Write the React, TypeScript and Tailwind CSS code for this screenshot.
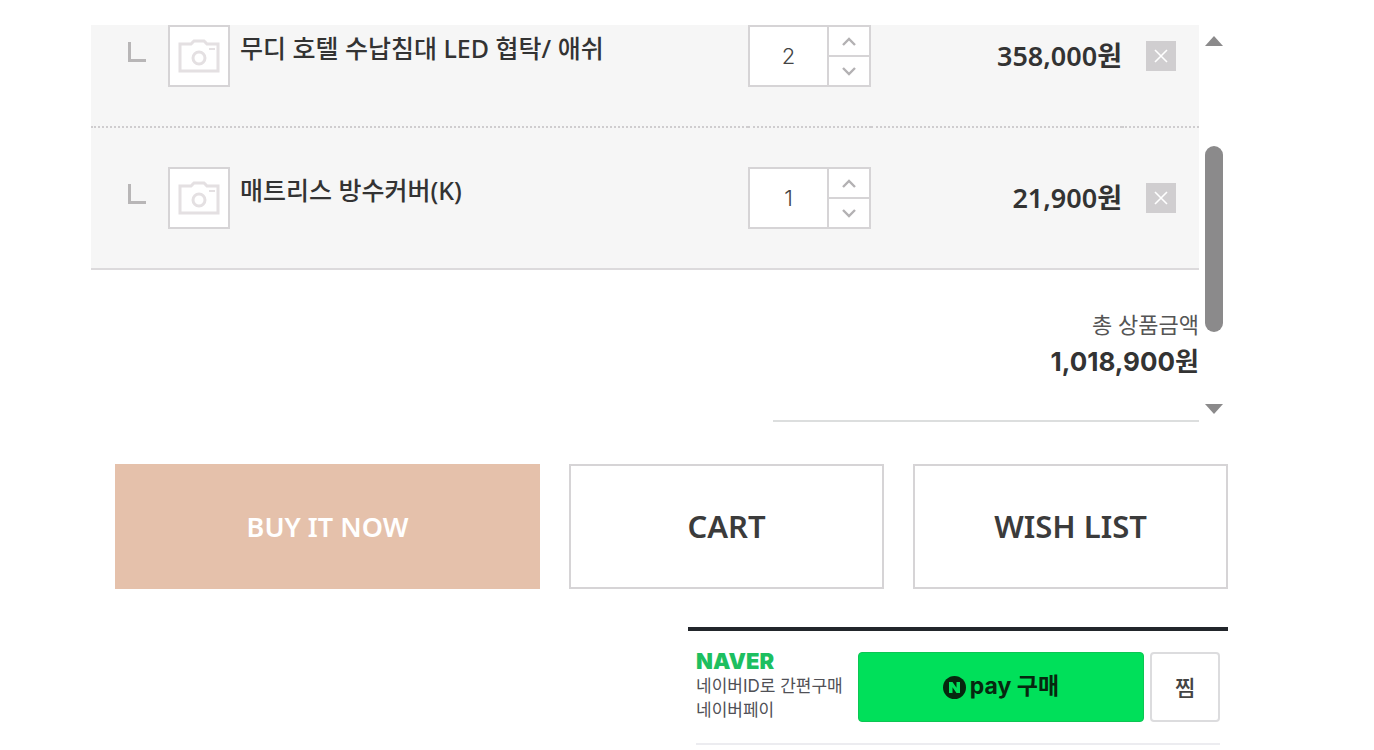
import { useState } from "react";

type CartItem = {
  id: string;
  name: string;
  price: number;
  quantity: number;
};

const initialItems: CartItem[] = [
  { id: "nightstand", name: "무디 호텔 수납침대 LED 협탁/ 애쉬", price: 179000, quantity: 2 },
  { id: "cover", name: "매트리스 방수커버(K)", price: 21900, quantity: 1 },
];

const BASE_TOTAL = 639000;

const formatWon = (value: number) => `${value.toLocaleString("en-US")}원`;

function CameraIcon() {
  return (
    <svg width="42" height="34" viewBox="0 0 42 34" fill="none" stroke="#e4e0e2" aria-hidden="true">
      <path d="M2 5H13L16 2H26L29 5H40V32H2Z" strokeWidth="3" />
      <circle cx="21" cy="19" r="6" strokeWidth="3" />
      <path d="M31 10H37" strokeWidth="2" />
    </svg>
  );
}

function Chevron({ up = false }: { up?: boolean }) {
  return (
    <svg width="14" height="9" viewBox="0 0 14 9" fill="none" stroke="#b3b1b3" strokeWidth="2.4" aria-hidden="true">
      <path d={up ? "M1 8L7 2L13 8" : "M1 1L7 7L13 1"} />
    </svg>
  );
}

function ItemRow({
  item,
  onChange,
  onRemove,
}: {
  item: CartItem;
  onChange: (quantity: number) => void;
  onRemove: () => void;
}) {
  return (
    <tr className="group">
      <td className="border-b-2 border-dotted border-[#cfcdcf] py-[39px] pl-[37px] group-first:pt-0 group-last:border-solid group-last:border-[#dcdadc]">
        <div className="flex items-start">
          <svg width="18" height="20" viewBox="0 0 18 20" fill="none" className="mt-[17px] shrink-0" aria-hidden="true">
            <path d="M1.5 0V18.5H18" stroke="#b8b6b7" strokeWidth="3" />
          </svg>
          <div className="ml-[22px] flex size-[62px] shrink-0 items-center justify-center border-2 border-[#d6d4d6] bg-white">
            <CameraIcon />
          </div>
          <span className="ml-2.5 pt-1 text-[25px] leading-[38px] font-medium text-[#333]">{item.name}</span>
        </div>
      </td>
      <td className="border-b-2 border-dotted border-[#cfcdcf] py-[39px] group-first:pt-0 group-last:border-solid group-last:border-[#dcdadc]">
        <div className="flex h-[62px] border-2 border-[#d6d4d6] bg-white">
          <input
            aria-label={`${item.name} 수량`}
            inputMode="numeric"
            value={item.quantity}
            onChange={(event) => onChange(Number(event.target.value) || 1)}
            className="w-full min-w-0 flex-1 text-center font-['Inter'] text-[22px] font-light text-[#444] outline-none"
          />
          <div className="flex w-[42px] flex-col border-l-2 border-[#d6d4d6]">
            <button
              type="button"
              aria-label="수량 증가"
              onClick={() => onChange(item.quantity + 1)}
              className="flex flex-1 items-center justify-center border-b-2 border-[#d6d4d6]"
            >
              <Chevron up />
            </button>
            <button
              type="button"
              aria-label="수량 감소"
              onClick={() => onChange(Math.max(1, item.quantity - 1))}
              className="flex flex-1 items-center justify-center"
            >
              <Chevron />
            </button>
          </div>
        </div>
      </td>
      <td className="border-b-2 border-dotted border-[#cfcdcf] py-[39px] text-right text-[27px] leading-[40px] font-semibold text-[#333] group-first:pt-0 group-last:border-solid group-last:border-[#dcdadc]">
        {formatWon(item.price * item.quantity)}
      </td>
      <td className="border-b-2 border-dotted border-[#cfcdcf] py-[39px] pl-6 group-first:pt-0 group-last:border-solid group-last:border-[#dcdadc]">
        <button
          type="button"
          aria-label="삭제"
          onClick={onRemove}
          className="flex size-[30px] items-center justify-center bg-[#d0ced0]"
        >
          <svg width="14" height="14" viewBox="0 0 14 14" stroke="#fff" strokeWidth="1.6" aria-hidden="true">
            <path d="M1 1L13 13M13 1L1 13" />
          </svg>
        </button>
      </td>
    </tr>
  );
}

function ScrollBar() {
  return (
    <div className="ml-1.5 flex w-[18px] flex-col pt-[11px] pb-2" aria-hidden="true">
      <svg width="18" height="10" viewBox="0 0 18 10" fill="#8b8a8b">
        <path d="M9 0L18 10H0Z" />
      </svg>
      <div className="mt-[100px] h-[186px] rounded-full bg-[#8b8a8b]" />
      <svg width="18" height="10" viewBox="0 0 18 10" fill="#8b8a8b" className="mt-auto">
        <path d="M0 0H18L9 10Z" />
      </svg>
    </div>
  );
}

function NaverPay() {
  return (
    <section className="mt-[38px] ml-auto w-[540px] border-t-4 border-[#22262b] px-2">
      <div className="flex items-start border-b-2 border-[#ececf0] py-[21px]">
        <div className="w-[162px] shrink-0 font-['Inter','Noto_Sans_CJK_KR',sans-serif] text-[17px] leading-6 text-[#505056]">
          <strong className="mb-1 block text-[22px] leading-[18px] font-black text-[#1dbf60]">NAVER</strong>
          <p className="whitespace-nowrap">
            네이버ID로 간편구매
            <br />
            네이버페이
          </p>
        </div>
        <button
          type="button"
          className="flex h-[70px] flex-1 items-center justify-center rounded-[4px] border border-[#0cc653] bg-[#00e05a] text-[#06270f]"
        >
          <svg width="23" height="23" viewBox="0 0 23 23" aria-hidden="true">
            <circle cx="11.5" cy="11.5" r="11.5" fill="#06270f" />
            <path d="M6 17V6H9.5L13.5 11.8V6H17V17H13.5L9.5 11.2V17Z" fill="#00e05a" />
          </svg>
          <span className="ml-1 pb-0.5 font-['Inter','Noto_Sans_CJK_KR',sans-serif] text-[23px] leading-7 font-bold">
            pay 구매
          </span>
        </button>
        <button
          type="button"
          className="ml-1.5 h-[70px] w-[70px] rounded-[4px] border-2 border-[#dcdcde] text-[22px] font-medium text-[#444]"
        >
          찜
        </button>
      </div>
    </section>
  );
}

export default function App() {
  const [items, setItems] = useState(initialItems);
  const total = items.reduce((sum, item) => sum + item.price * item.quantity, BASE_TOTAL);

  const updateQuantity = (id: string, quantity: number) => {
    setItems((prev) => prev.map((item) => (item.id === id ? { ...item, quantity } : item)));
  };

  return (
    <main className="bg-white pt-[25px] pr-[146px] pl-[91px] font-['Noto_Sans','Noto_Sans_CJK_KR',sans-serif]">
      <div className="flex pr-[5px]">
        <div className="flex-1">
          <table className="w-full table-fixed border-separate border-spacing-0 bg-[#f6f6f6]">
            <colgroup>
              <col />
              <col className="w-[123px]" />
              <col className="w-[251px]" />
              <col className="w-[77px]" />
            </colgroup>
            <tbody>
              {items.map((item) => (
                <ItemRow
                  key={item.id}
                  item={item}
                  onChange={(quantity) => updateQuantity(item.id, quantity)}
                  onRemove={() => setItems((prev) => prev.filter(({ id }) => id !== item.id))}
                />
              ))}
            </tbody>
          </table>
          <div className="ml-auto w-[426px] border-b-2 border-[#dcdede] pt-9 pb-[38px] text-right text-[#333]">
            <p className="text-[22px] leading-9 text-[#555]">총 상품금액</p>
            <p className="font-['Inter','Noto_Sans_CJK_KR',sans-serif] text-[26px] leading-[40px] font-bold">
              {formatWon(total)}
            </p>
          </div>
        </div>
        <ScrollBar />
      </div>

      <div className="mt-[42px] ml-6 grid h-[125px] grid-cols-[425fr_315fr_315fr] gap-[29px] text-[31px] font-semibold text-[#3b3b3b]">
        <button type="button" className="bg-[#e5c1ab] pt-0.5 text-[27px] text-white">
          BUY IT NOW
        </button>
        <button type="button" className="border-2 border-[#d6d4d6]">
          CART
        </button>
        <button type="button" className="border-2 border-[#d6d4d6]">
          WISH LIST
        </button>
      </div>

      <NaverPay />
    </main>
  );
}
